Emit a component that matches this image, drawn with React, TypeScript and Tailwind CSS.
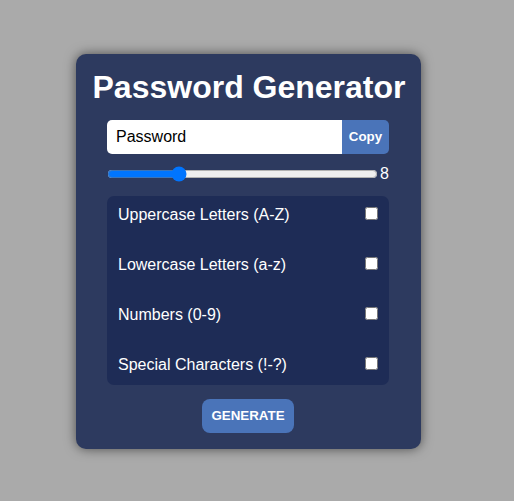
import React from "react";

const opts = [
  "Uppercase Letters (A-Z)",
  "Lowercase Letters (a-z)",
  "Numbers (0-9)",
  "Special Characters (!-?)",
];

export default function App() {
  return (
    <div
      className="min-h-screen bg-[#aaaaaa] pt-[54px] pl-[76px]"
      style={{ fontFamily: '"Liberation Sans", Arial, sans-serif' }}
    >
      <div className="w-[345px] h-[395px] bg-[#2d3a5f] rounded-[10px] shadow-[0_0_12px_rgba(0,0,0,0.55)] flex flex-col items-start pl-[31px] pt-[15px]">
        <h1 className="-ml-[31px] w-[345px] pl-[1px] text-center text-[32px] leading-[37px] font-bold text-white whitespace-nowrap">
          Password Generator
        </h1>
        <div className="mt-[14px] w-[282px] h-[34px] flex">
          <div className="flex-1 bg-white rounded-l-[5px] flex items-center pl-[9px] text-[16px] text-black">
            Password
          </div>
          <div className="w-[47px] bg-[#4a74b9] rounded-r-[5px] flex items-center justify-center text-white font-bold text-[13.33px]">
            Copy
          </div>
        </div>
        <div className="mt-[12px] w-[282px] flex items-center h-[16px]">
          <input
            type="range"
            min={0}
            max={32}
            defaultValue={8}
            className="w-[271px] m-0"
          />
          <span className="text-white text-[16px] leading-none ml-[2px]">8</span>
        </div>
        <div className="mt-[14px] w-[282px] bg-[#1e2c56] rounded-[7px] flex flex-col gap-[12px] pb-[1px]">
          {opts.map((o) => (
            <div key={o} className="h-[38px] px-[11px] flex items-center justify-between text-white text-[16px]">
              <span>{o}</span>
              <input type="checkbox" className="w-[13px] h-[13px] m-0 mb-[3px]" />
            </div>
          ))}
        </div>
        <button className="mt-[14px] ml-[95px] w-[92px] h-[34px] bg-[#4a74b9] rounded-[8px] text-white font-bold text-[13.33px]">
          GENERATE
        </button>
      </div>
    </div>
  );
}
